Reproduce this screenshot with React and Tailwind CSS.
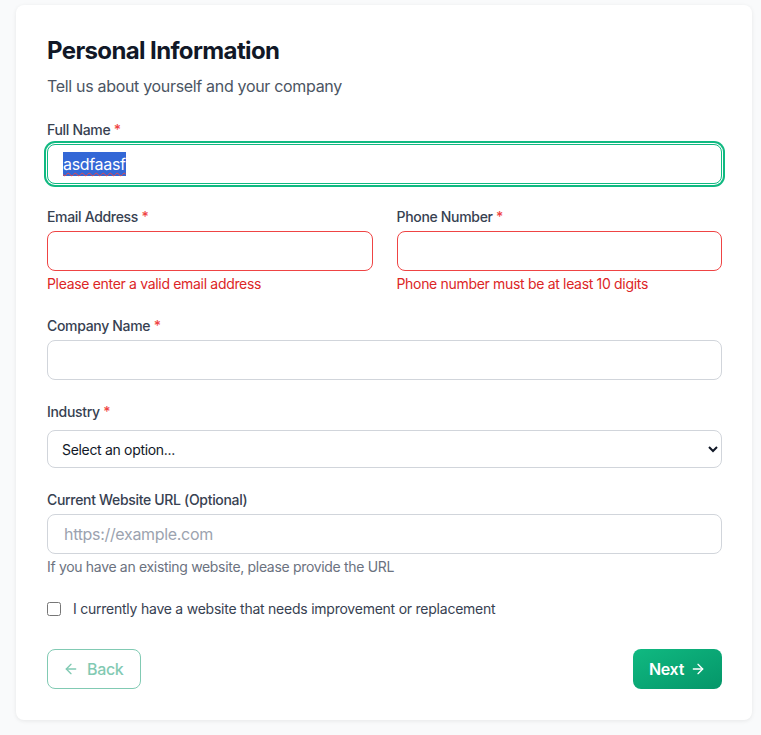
// Personal information step of the onboarding form

import { ArrowLeft, ArrowRight } from 'lucide-react';

const inputBase =
  'block w-full h-10 rounded-lg border bg-white px-4 text-base text-[#111827] placeholder:text-[#9ca3af] focus:outline-none';

function Label({ children, required, className = 'mb-1' }) {
  return (
    <label className={`block text-sm font-medium leading-5 text-[#374151] ${className}`}>
      {children}
      {required && <span className="text-[#ef4444]"> *</span>}
    </label>
  );
}

export default function App() {
  return (
    <div className="min-h-screen bg-[#f9fafb] pt-[5px] pb-4 font-['Inter',sans-serif] tracking-[-0.02em]">
      <div className="ml-4 w-[736px] rounded-lg bg-white pl-[31px] pr-[30px] pt-[30px] pb-[31px] shadow-[0_1px_4px_rgba(0,0,0,0.08)]">
        {/* ====== HEADER ====== */}
        <h2 className="text-2xl font-bold leading-8 tracking-[-0.026em] text-[#111827]">Personal Information</h2>
        <p className="mt-[7px] text-base leading-6 text-[#4b5563]">Tell us about yourself and your company</p>

        {/* ====== FULL NAME (focused) ====== */}
        <div className="mt-[22px]">
          <Label required>Full Name</Label>
          <div
            role="textbox"
            className="flex h-10 items-center rounded-lg border border-[#10b981] bg-white px-[15px] text-base ring-2 ring-[#10b981] ring-offset-1"
          >
            <span className="bg-[#3367d6] text-white underline decoration-wavy decoration-[#ef4444] decoration-1 underline-offset-2 leading-6">
              asdfaasf
            </span>
          </div>
        </div>

        {/* ====== EMAIL + PHONE ====== */}
        <div className="mt-[23px] grid grid-cols-2 gap-6">
          <div>
            <Label required>Email Address</Label>
            <input type="email" className={`${inputBase} border-[#ef4444]`} />
            <p className="mt-[3px] text-sm leading-5 text-[#dc2626]">Please enter a valid email address</p>
          </div>
          <div>
            <Label required>Phone Number</Label>
            <input type="tel" className={`${inputBase} border-[#ef4444]`} />
            <p className="mt-[3px] text-sm leading-5 text-[#dc2626]">Phone number must be at least 10 digits</p>
          </div>
        </div>

        {/* ====== COMPANY ====== */}
        <div className="mt-[22px]">
          <Label required>Company Name</Label>
          <input type="text" className={`${inputBase} border-[#d1d5db]`} />
        </div>

        {/* ====== INDUSTRY ====== */}
        <div className="mt-[22px]">
          <Label required className="mb-2">Industry</Label>
          <select
            defaultValue=""
            className="block h-[38px] w-full rounded-lg border border-[#d1d5db] bg-white px-[10px] text-sm text-[#111827]"
          >
            <option value="">Select an option...</option>
            <option>Technology</option>
            <option>Retail</option>
            <option>Healthcare</option>
          </select>
        </div>

        {/* ====== WEBSITE ====== */}
        <div className="mt-[22px]">
          <Label>Current Website URL (Optional)</Label>
          <input type="url" placeholder="https://example.com" className={`${inputBase} border-[#d1d5db]`} />
          <p className="mt-[3px] text-sm leading-5 text-[#6b7280]">If you have an existing website, please provide the URL</p>
        </div>

        <label className="mt-[22px] flex h-5 items-center gap-3 text-sm tracking-[-0.017em] text-[#374151]">
          <input type="checkbox" className="h-3.5 w-3.5" />
          I currently have a website that needs improvement or replacement
        </label>

        {/* ====== NAVIGATION ====== */}
        <div className="mt-[30px] flex items-center justify-between">
          <button
            disabled
            className="flex h-10 items-center gap-2 rounded-lg border border-[#059669] pl-[15px] pr-4 text-base font-medium text-[#059669] opacity-50"
          >
            <ArrowLeft className="h-4 w-4" />
            Back
          </button>
          <button className="flex h-10 items-center gap-1.5 rounded-lg bg-gradient-to-br from-[#10b981] to-[#059669] px-4 text-base font-semibold text-white">
            Next
            <ArrowRight className="h-4 w-4" />
          </button>
        </div>
      </div>
    </div>
  );
}
